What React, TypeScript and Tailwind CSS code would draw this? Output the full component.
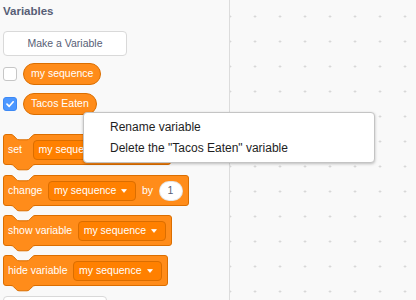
import React from "react";

const font = "font-['Liberation_Sans',Arial,Helvetica,sans-serif]";

function Notch() {
  return (
    <svg
      className="absolute left-[7px] top-[-1px] overflow-visible"
      width="24"
      height="7"
      viewBox="0 0 24 7"
    >
      <path
        d="M0,0 H24 V0.5 C22.7,0.5 22,1.2 21.3,1.8 L18.7,4.5 C18,5.2 17.3,5.8 16,5.8 H8 C6.7,5.8 6,5.2 5.3,4.5 L2.7,1.8 C2,1.2 1.3,0.5 0,0.5 Z"
        fill="#f9f9f9"
      />
      <path
        d="M-0.5,0.5 H0 C1.3,0.5 2,1.2 2.7,1.8 L5.3,4.5 C6,5.2 6.7,5.8 8,5.8 H16 C17.3,5.8 18,5.2 18.7,4.5 L21.3,1.8 C22,1.2 22.7,0.5 24,0.5 H24.5"
        fill="none"
        stroke="#db6e00"
        strokeWidth="1"
      />
    </svg>
  );
}

function Tab() {
  return (
    <svg
      className="absolute left-[7px] top-full overflow-visible"
      width="24"
      height="7"
      viewBox="0 0 24 7"
    >
      <path
        d="M0,0 H24 V0.5 C22.7,0.5 22,1.2 21.3,1.8 L18.7,4.5 C18,5.2 17.3,5.8 16,5.8 H8 C6.7,5.8 6,5.2 5.3,4.5 L2.7,1.8 C2,1.2 1.3,0.5 0,0.5 Z"
        fill="#ff8c1a"
      />
      <path
        d="M-0.5,0.5 H0 C1.3,0.5 2,1.2 2.7,1.8 L5.3,4.5 C6,5.2 6.7,5.8 8,5.8 H16 C17.3,5.8 18,5.2 18.7,4.5 L21.3,1.8 C22,1.2 22.7,0.5 24,0.5 H24.5"
        fill="none"
        stroke="#db6e00"
        strokeWidth="1"
      />
    </svg>
  );
}

function Block({ className, children }: { className?: string; children: React.ReactNode }) {
  return (
    <div
      className={
        "relative flex h-[31px] shrink-0 items-center gap-[5.5px] rounded-[3px] border border-[#db6e00] bg-[#ff8c1a] pl-[4px] pr-[5px] text-[10.5px] text-white " +
        (className ?? "")
      }
    >
      <Notch />
      {children}
      <Tab />
    </div>
  );
}

function Dropdown({ className }: { className?: string }) {
  return (
    <div
      className={
        "flex h-[20px] shrink-0 items-center gap-[5px] rounded-[4px] border border-[#db6e00] bg-[#ff8000] pl-[5px] pr-[8px] " +
        (className ?? "")
      }
    >
      <span>my sequence</span>
      <svg width="6" height="4" viewBox="0 0 6 4">
        <path d="M0.6,0.6 H5.4 L3,3.4 Z" fill="#fff" stroke="#fff" strokeWidth="0.8" strokeLinejoin="round" />
      </svg>
    </div>
  );
}

function NumInput({ value }: { value: string }) {
  return (
    <div className="flex h-[20px] w-[24px] shrink-0 items-center justify-center rounded-full border border-[rgba(0,0,0,0.1)] bg-white text-[10.5px] text-[#575e75]">
      {value}
    </div>
  );
}

function Reporter({ label }: { label: string }) {
  return (
    <div className="flex h-[22px] items-center rounded-full border border-[#db6e00] bg-[#ff8c1a] px-[7px] text-[10.5px] text-white">
      {label}
    </div>
  );
}

export default function App() {
  return (
    <div className={"relative flex h-[300px] w-[416px] overflow-hidden bg-[#f9f9f9] " + font}>
      {/* Sidebar / flyout */}
      <div className="flex h-full w-[230px] shrink-0 flex-col items-start overflow-hidden border-r border-[#dcdcdc] bg-[#f9f9f9] pl-[3px]">
        <div className="mt-[4px] h-[14px] shrink-0 text-[11.5px] font-bold leading-[14px] text-[#575e75]">Variables</div>

        <div className="mt-[13px] flex h-[25px] w-[124px] shrink-0 items-center justify-center rounded-[4px] border border-[#d9d9d9] bg-white text-[10.5px] text-[#575e75]">
          Make a Variable
        </div>

        <div className="mt-[7px] flex h-[22px] shrink-0 items-center gap-[6px]">
          <div className="h-[14px] w-[14px] rounded-[3px] border border-[#c6c6c6] bg-white" />
          <Reporter label="my sequence" />
        </div>

        <div className="mt-[8px] flex h-[22px] shrink-0 items-center gap-[6px]">
          <div className="flex h-[14px] w-[14px] items-center justify-center rounded-[3px] border border-[#3d89f5] bg-[#4c97ff]">
            <svg width="10" height="10" viewBox="0 0 10 10">
              <path d="M2,5.2 L4.2,7.3 L8.2,2.8" fill="none" stroke="#fff" strokeWidth="1.7" strokeLinecap="round" strokeLinejoin="round" />
            </svg>
          </div>
          <Reporter label="Tacos Eaten" />
        </div>

        <Block className="mt-[19px]">
          <span>set</span>
          <Dropdown className="ml-[5px]" />
          <span>to</span>
          <NumInput value="0" />
        </Block>

        <Block className="mt-[10px]">
          <span>change</span>
          <Dropdown />
          <span>by</span>
          <NumInput value="1" />
        </Block>

        <Block className="mt-[9px]">
          <span>show variable</span>
          <Dropdown />
        </Block>

        <Block className="mt-[9px]">
          <span>hide variable</span>
          <Dropdown />
        </Block>

        <div className="mt-[10px] h-[25px] w-[104px] shrink-0 rounded-[4px] border border-[#d9d9d9] bg-white" />
      </div>

      {/* Workspace canvas */}
      <div className="h-full flex-1 bg-[#f9f9f9] bg-[radial-gradient(circle,#cfcfcf_0.8px,transparent_1.3px)] bg-[length:25px_25px] bg-[position:-12.5px_4px]" />

      {/* Context menu */}
      <div className="absolute left-[83px] top-[112px] w-[292px] rounded-[4px] border border-[#c4c4c4] bg-white pb-[4px] pt-[3px] text-[12px] text-[#1e1e1e] shadow-[0_1px_3px_rgba(0,0,0,0.25)]">
        <div className="flex h-[21px] items-center pl-[26px]">Rename variable</div>
        <div className="flex h-[21px] items-center pl-[26px]">Delete the "Tacos Eaten" variable</div>
      </div>
    </div>
  );
}
